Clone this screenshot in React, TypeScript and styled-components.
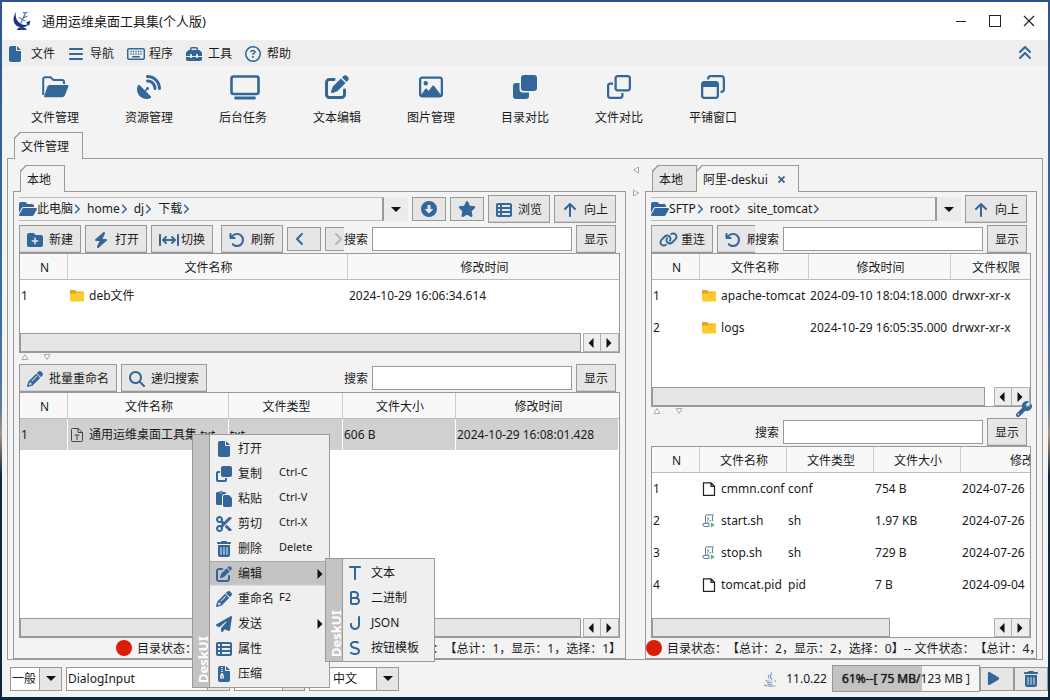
import React from "react";
import styled, { createGlobalStyle, css } from "styled-components";
import {
  FaAngleLeft, FaAngleRight, FaAnglesUp, FaArrowRotateLeft, FaArrowUp, FaArrowsLeftRightToLine, FaB, FaBars,
  FaBolt, FaCircleDown, FaClone, FaFile, FaFileZipper, FaFolderOpen, FaFolderPlus, FaJ, FaJava, FaLink,
  FaMagnifyingGlass, FaPaperPlane, FaPaste, FaPenToSquare, FaPencil, FaPlay, FaRegCircleQuestion, FaRegClone,
  FaRegImage, FaRegKeyboard, FaRegWindowRestore, FaS, FaSatelliteDish, FaScissors, FaStar, FaT, FaTableList,
  FaToolbox, FaTrashCan, FaWrench,
} from "react-icons/fa6";

const BLUE = "#336699";
const LINE = "#999999";
const FACE = "#e6e6e6";
const PANEL = "#f3f3f3";

const Global = createGlobalStyle`
  * { box-sizing: border-box; }
  body {
    margin: 0;
    font: 12px/16px "Noto Sans", "Noto Sans CJK SC", sans-serif;
    color: #1a1a1a;
    text-spacing-trim: space-all;
  }
  button, input, select { font: inherit; color: inherit; margin: 0; padding: 0; border-radius: 0; }
  svg { display: block; flex: none; }
`;

const Desktop = styled.div`
  height: 100vh;
  min-height: 560px;
  padding: 2px 2px 3px;
  display: flex;
  background: linear-gradient(#2c5590 0, #3a6ba8 45%, #5a7ba0 58%, #a89484 62%, #10263c 68%, #0b2740 100%);
`;

const Window = styled.div`
  position: relative;
  flex: 1;
  min-width: 0;
  display: flex;
  flex-direction: column;
  background: ${PANEL};
`;

/* ---------- title, menus, launcher ---------- */

const TitleBar = styled.header`
  height: 38px;
  display: flex;
  align-items: center;
  gap: 10px;
  padding: 0 12px 0 10px;
  background: #fff;
`;

const Title = styled.h1`
  flex: 1;
  margin: 0;
  font-size: 13px;
  font-weight: 400;
`;

const WindowControls = styled.div`
  display: flex;
  gap: 20px;
`;

const PlainButton = styled.button`
  display: flex;
  align-items: center;
  border: 0;
  background: none;
`;

const MenuBar = styled.nav`
  height: 26px;
  display: flex;
  align-items: center;
  gap: 13px;
  padding: 0 15px 0 7px;
  background: #eeeeee;
`;

const MenuButton = styled(PlainButton)`
  width: 46px;
  padding-top: 1px;
  justify-content: space-between;
  white-space: nowrap;
  svg { color: ${BLUE}; }
`;

const CollapseButton = styled(PlainButton)`
  margin-left: auto;
  color: ${BLUE};
`;

const Launcher = styled.div`
  height: 66px;
  display: flex;
  padding: 8px 6px 0;
`;

const LaunchButton = styled.button`
  width: 94px;
  display: flex;
  flex-direction: column;
  align-items: center;
  gap: 10px;
  border: 0;
  background: none;
`;

const LaunchIcon = styled.span`
  height: 26px;
  display: flex;
  align-items: center;
  color: ${BLUE};
`;

/* ---------- tabs and panes ---------- */

const Tabs = styled.div<{ $indent: number }>`
  height: 27px;
  margin-bottom: -1px;
  padding-left: ${(p) => p.$indent}px;
  display: flex;
  flex: none;
  position: relative;
`;

const Tab = styled.button<{ $active?: boolean }>`
  display: flex;
  align-items: center;
  gap: 10px;
  padding: 2px 13px ${(p) => (p.$active ? 1 : 0)}px 6px;
  border: 1px solid ${LINE};
  ${(p) => p.$active && "border-bottom: 0;"}
  border-top-left-radius: 6px;
  corner-shape: bevel;
  background: ${(p) => (p.$active ? PANEL : FACE)};
  & + & { margin-left: -1px; }
  svg { color: ${BLUE}; }
`;

const Workspace = styled.main`
  flex: 1;
  min-height: 0;
  margin: 0 5px;
  padding: 6px 5px 0;
  border: 1px solid ${LINE};
  display: grid;
  grid-template-columns: minmax(0, 61fr) 19px minmax(0, 39fr);
`;

const Column = styled.section`
  display: flex;
  flex-direction: column;
  min-height: 0;
`;

const Pane = styled.div`
  flex: 1;
  min-height: 0;
  display: flex;
  flex-direction: column;
  padding: 3px 5px 0;
  border: 1px solid ${LINE};
`;

const ColumnHandle = styled.div`
  display: flex;
  flex-direction: column;
  align-items: center;
  gap: 15px;
  padding-top: 1px;
`;

const RowHandle = styled.div`
  height: 11px;
  flex: none;
  display: flex;
  align-items: flex-start;
  gap: 14px;
  padding-left: 2px;
`;

/* ---------- tool rows ---------- */

const ToolRow = styled.div`
  height: 28px;
  flex: none;
  display: flex;
  align-items: center;
  gap: 4px;
  padding-right: 4px;
  & + & { margin-top: 2px; }
`;

const ToolGroup = styled.div`
  flex: 1;
  min-width: 0;
  display: flex;
  align-items: center;
  gap: 4px;
  overflow: hidden;
`;

const Gap = styled.span`
  width: 0;
  flex: none;
`;

const face = css`
  display: flex;
  align-items: center;
  flex: none;
  border: 1px solid ${LINE};
  background: ${FACE};
  white-space: nowrap;
  svg { color: ${BLUE}; }
`;

const ToolButton = styled.button<{ $width?: number }>`
  ${face}
  width: ${(p) => p.$width ?? 62}px;
  height: 28px;
  padding: 1px 7px 0;
  justify-content: space-between;
  box-shadow: inset 0 -1px #cfcfcf;
`;

const IconButton = styled.button<{ $muted?: boolean; $step?: boolean }>`
  ${face}
  width: 34px;
  height: 24px;
  justify-content: center;
  padding-right: ${(p) => (p.$step ? 8 : 0)}px;
  ${(p) => p.$muted && "svg { color: #b5b9b0; }"}
`;

const ShowButton = styled.button`
  ${face}
  width: 40px;
  height: 28px;
  padding-top: 1px;
  justify-content: center;
  box-shadow: inset 0 -1px #cfcfcf;
`;

const SearchLabel = styled.label`
  display: flex;
  align-items: center;
  flex: none;
  margin-left: -4px;
  padding-top: 1px;
`;

const SearchInput = styled.input`
  width: 200px;
  height: 24px;
  padding: 0 4px;
  border: 1px solid ${LINE};
  background: #fff;
`;

const PathBox = styled.div`
  flex: 1;
  min-width: 0;
  height: 24px;
  display: flex;
  align-items: center;
  gap: 7px;
  border: 1px solid #bbb;
  border-left: 0;
  border-right: 2px solid ${LINE};
  margin-right: -4px;
  overflow: hidden;
`;

const Crumb = styled.a`
  display: flex;
  align-items: center;
  color: inherit;
  text-decoration: none;
  white-space: nowrap;
  svg { color: ${BLUE}; }
`;

const CrumbArrow = styled(FaAngleRight)`
  margin: 0 -3px 0 -2px;
`;

const DropButton = styled.button`
  width: 24px;
  height: 24px;
  display: flex;
  align-items: center;
  justify-content: center;
  border: 0;
  background: #ebebeb;
`;

/* ---------- tables ---------- */

const TableFrame = styled.div<{ $height?: number }>`
  ${(p) => (p.$height ? `height: ${p.$height}px; flex: none;` : "flex: 1; min-height: 0;")}
  display: flex;
  flex-direction: column;
  border: 1px solid ${LINE};
  background: #fff;
`;

const TableView = styled.div`
  flex: 1;
  min-height: 0;
  overflow: hidden;
`;

const Table = styled.table<{ $width?: number }>`
  width: ${(p) => (p.$width ? `${p.$width}px` : "100%")};
  table-layout: fixed;
  border-collapse: separate;
  border-spacing: 0;
`;

const Th = styled.th`
  height: 26px;
  padding: 2px 0 0 2px;
  font-weight: 400;
  text-align: center;
  background: #f8f8f8;
  border-right: 1px solid #ccc;
  border-bottom: 1px solid #bbb;
  white-space: nowrap;
  overflow: hidden;
  &:last-child { border-right: 0; }
`;

const Td = styled.td<{ $selected?: boolean }>`
  height: 32px;
  padding: 0 0 0 1px;
  white-space: nowrap;
  overflow: hidden;
  ${(p) => p.$selected && "background: #d0d0d0; border-right: 1px solid #fff; border-bottom: 1px solid #fff;"}
`;

const NameCell = styled.span`
  display: flex;
  align-items: center;
  gap: 5px;
  padding-left: 1px;
`;

const ScrollBar = styled.div`
  height: 19px;
  flex: none;
  display: flex;
`;

const ScrollTrack = styled.div`
  flex: 1;
  padding-right: 2px;
`;

const ScrollThumb = styled.div<{ $share: number }>`
  width: ${(p) => p.$share}%;
  height: 100%;
  background: ${FACE};
  border: 1px solid ${LINE};
`;

const ScrollButton = styled.button`
  width: 18px;
  display: flex;
  align-items: center;
  justify-content: center;
  padding-right: 2px;
  border: 1px solid #b0b0b0;
  background: #ededed;
  & + & { border-left: 0; }
`;

const Status = styled.div<{ $end?: boolean }>`
  height: 20px;
  flex: none;
  margin: 0 -5px;
  display: flex;
  align-items: center;
  justify-content: ${(p) => (p.$end ? "flex-end" : "flex-start")};
  gap: 5px;
  padding-right: ${(p) => (p.$end ? 4 : 0)}px;
  overflow: hidden;
  white-space: nowrap;
`;

const StatusText = styled.span`
  padding-top: 1px;
`;

const Lamp = styled.span`
  width: 16px;
  height: 16px;
  flex: none;
  border-radius: 50%;
  background: #d81e06;
`;

const WrenchButton = styled(PlainButton)`
  position: absolute;
  right: 16px;
  top: 399px;
  color: ${BLUE};
`;

/* ---------- bottom bar ---------- */

const BottomBar = styled.footer`
  height: 37px;
  flex: none;
  display: flex;
  align-items: center;
  padding-left: 8px;
  gap: 4px;
`;

const Combo = styled.span<{ $width: number }>`
  width: ${(p) => p.$width}px;
  height: 24px;
  flex: none;
  display: flex;
  border: 1px solid ${LINE};
  background: #fff;
`;

const ComboSelect = styled.select<{ $centred?: boolean }>`
  flex: 1;
  min-width: 0;
  padding-left: ${(p) => (p.$centred ? 4 : 1)}px;
  text-align-last: ${(p) => (p.$centred ? "center" : "left")};
  border: 0;
  appearance: none;
  background: #fff;
`;

const ComboArrow = styled.span`
  width: 22px;
  display: flex;
  align-items: center;
  justify-content: center;
  border-left: 1px solid ${LINE};
  background: ${FACE};
  pointer-events: none;
`;

const Java = styled.div`
  margin-left: auto;
  display: flex;
  align-items: center;
  gap: 8px;
  svg { color: #4c7faf; }
`;

const Memory = styled.div`
  width: 148px;
  height: 27px;
  margin-left: 1px;
  display: flex;
  align-items: center;
  justify-content: center;
  border: 1px solid ${LINE};
  background: linear-gradient(90deg, #c3c3c3 61%, #f5f5f5 61%);
  white-space: pre;
`;

const MemoryUsed = styled.span`
  text-shadow: 0 0 1px #1a1a1a;
`;

const RunButtons = styled.div`
  display: flex;
  margin-left: -4px;
`;

/* ---------- popup menus ---------- */

const Popup = styled.div<{ $left: number; $top: number; $width: number }>`
  position: absolute;
  left: ${(p) => p.$left}px;
  top: ${(p) => p.$top}px;
  width: ${(p) => p.$width}px;
  display: flex;
  border: 1px solid ${LINE};
  background: #efefef;
`;

const Brand = styled.div`
  width: 17px;
  flex: none;
  display: flex;
  align-items: flex-end;
  background: #c3c3c3;
  border-left: 1px solid ${LINE};
  padding-top: 4px;
  color: #fff;
  font-size: 13px;
  font-weight: 700;
  line-height: 11px;
  writing-mode: vertical-rl;
  transform: rotate(180deg);
`;

const PopupList = styled.div`
  flex: 1;
  padding: 1px 0;
`;

const PopupItem = styled.button<{ $active?: boolean; $wide?: boolean }>`
  width: 100%;
  height: 25px;
  display: flex;
  align-items: center;
  gap: ${(p) => (p.$wide ? 7 : 6)}px;
  padding: 0 6px 0 ${(p) => (p.$wide ? 3 : 6)}px;
  border: 0;
  white-space: nowrap;
  text-align: left;
  background: ${(p) => (p.$active ? "#c3c3c3" : "transparent")};
  box-shadow: ${(p) => (p.$active ? "inset 0 1px #aaa, inset 0 -1px #ddd" : "none")};
`;

const PopupIcon = styled.span<{ $wide?: boolean }>`
  width: ${(p) => (p.$wide ? 18 : 16)}px;
  flex: none;
  display: flex;
  justify-content: center;
  color: ${BLUE};
`;

const PopupText = styled.span`
  min-width: 36px;
`;

const Shortcut = styled.span`
  font-size: 11px;
  margin: 0 0 3px -1px;
`;

const SubArrow = styled.span`
  margin-left: auto;
`;

/* ---------- drawings ---------- */

const Logo = () => (
  <svg width="20" height="22" viewBox="0 0 20 22">
    <path d="M4 2C0 8 1 14 6 16.500C10 18 14 17.500 17.500 13.500C14 15.500 10 15.500 7 12.500C4 10 3 6 4 2Z" fill="#1f2f86" />
    <path d="M13.500 3L8.500 14M13.500 3L15.500 2M13.500 3L11 2.500M15.500 6L12 7.500M7 7.500L10.500 9.500L13.500 11" stroke="#5d7fb5" strokeWidth="1.300" fill="none" />
    <path d="M4.500 20.500C6.500 16 12 16 15.500 20C12 19 11 21 9.500 19.500C8 21 7 19 4.500 20.500Z" fill="#1f2f86" />
    <path d="M14 12.500L18.500 10.500L17 16Z" fill="#1f2f86" />
  </svg>
);

const OpenFolder = () => (
  <svg width="27" height="22" viewBox="0 0 27 22">
    <path d="M1.200 19V3.200A2 2 0 0 1 3.200 1.200H8.500L11.500 4H20A2 2 0 0 1 22 6V8" fill="none" stroke="currentColor" strokeWidth="2" />
    <path d="M7.500 9H25.500Q27 9 26.400 10.500L22.800 19.500Q22 21.300 20 21.300H3Q1.600 21.300 2.200 19.700L5.400 10.600Q6 9 7.500 9Z" fill="currentColor" />
  </svg>
);

const Monitor = () => (
  <svg width="34" height="25" viewBox="-4 0 34 25">
    <rect x="1.500" y="1.500" width="27" height="17.500" rx="2" fill="none" stroke="currentColor" strokeWidth="2.600" />
    <path d="M5.500 23H24.500" stroke="currentColor" strokeWidth="2.800" strokeLinecap="round" />
  </svg>
);

const SolidPair = () => (
  <svg width="24" height="24" viewBox="0 0 24 24">
    <path d="M3 8H6.500V14Q6.500 17.500 10 17.500H16V21Q16 24 13 24H3Q0 24 0 21V11Q0 8 3 8Z" fill="currentColor" />
    <rect x="8" y="0" width="16" height="16" rx="3" fill="currentColor" />
  </svg>
);

const YellowFolder = () => (
  <svg width="14" height="12" viewBox="0 0 14 12">
    <path d="M0 2V1Q0 0 1 0H5L6.500 1.500H13Q14 1.500 14 2.500V5H0Z" fill="#e0a520" />
    <path d="M0 3.500H5.500L7 2.500H14V10.500Q14 11.500 13 11.500H1Q0 11.500 0 10.500Z" fill="#ffcb2d" />
  </svg>
);

const TextFile = () => (
  <svg width="14" height="14" viewBox="0 0 14 14" fill="none" stroke="#444">
    <path d="M2.500 .5H8L12.500 4.500V12.500Q12.500 13.500 11.500 13.500H2.500Q1.500 13.500 1.500 12.500V1.500Q1.500 .5 2.500 .5ZM8 .5V4.500H12.500" />
    <path d="M4.500 7H9.500M7 7V12" />
  </svg>
);

const BlankFile = () => (
  <svg width="14" height="14" viewBox="0 0 14 14" fill="none" stroke="#222" strokeWidth="1.200">
    <path d="M1.500 .8H9L12.500 4.300V13.300H1.500ZM9 .8V4.300H12.500" />
  </svg>
);

const ScriptFile = () => (
  <svg width="14" height="14" viewBox="0 0 14 14" fill="none" stroke="#5f8296">
    <path d="M3.500 9.500V2Q3.500 .8 5 .8H11.500Q10.500 1.500 10.500 3V7M3.500 9.500H1V11Q1 12.500 3 12.500H7V9.500H3.500" />
    <path d="M5 3.500L7 5L5 6.500M7.500 6.500H9M5 8H7" strokeWidth=".9" />
    <path d="M8.800 8.500L12.800 11L8.800 13.500Z" fill="#4fb36a" stroke="none" />
  </svg>
);

const shapes = {
  left: "M5 0L0 5L5 10Z",
  right: "M0 0L5 5L0 10Z",
  down: "M0 0H10L5 5Z",
};

const Solid = ({ dir }: { dir: keyof typeof shapes }) => (
  <svg width={dir === "down" ? 10 : 6} height={dir === "down" ? 5 : 10} viewBox={dir === "down" ? "0 0 10 5" : "0 0 5 10"}>
    <path d={shapes[dir]} fill="#111" />
  </svg>
);

const outlines = {
  left: "M6.500 1V7L1.500 4Z",
  right: "M1.500 1V7L6.500 4Z",
  up: "M1 6.500H7L4 1.500Z",
  down: "M1 1.500H7L4 6.500Z",
};

const Hollow = ({ dir }: { dir: keyof typeof outlines }) => (
  <svg width="8" height="8" viewBox="0 0 8 8">
    <path d={outlines[dir]} fill="#fff" stroke="#aaa" />
  </svg>
);

const CloseMark = () => (
  <svg width="7" height="7" viewBox="0 0 7 7">
    <path d="M.5 .5L6.500 6.500M6.500 .5L.5 6.500" stroke="currentColor" strokeWidth="1.800" />
  </svg>
);

/* ---------- data ---------- */

const MenuFile = styled(FaFile)`
  margin-left: -2px;
`;

const menus = [
  { text: "文件", icon: <MenuFile size={16} /> },
  { text: "导航", icon: <FaBars size={16} /> },
  { text: "程序", icon: <FaRegKeyboard size={18} /> },
  { text: "工具", icon: <FaToolbox size={16} /> },
  { text: "帮助", icon: <FaRegCircleQuestion size={16} /> },
];

const launchers = [
  { text: "文件管理", icon: <OpenFolder /> },
  { text: "资源管理", icon: <FaSatelliteDish size={24} /> },
  { text: "后台任务", icon: <Monitor /> },
  { text: "文本编辑", icon: <FaPenToSquare size={24} /> },
  { text: "图片管理", icon: <FaRegImage size={24} /> },
  { text: "目录对比", icon: <SolidPair /> },
  { text: "文件对比", icon: <FaRegClone size={24} /> },
  { text: "平铺窗口", icon: <FaRegWindowRestore size={24} /> },
];

type Item = { text: string; icon: React.ReactNode; keys?: string; sub?: boolean; active?: boolean };

const contextItems: Item[] = [
  { text: "打开", icon: <FaFile size={16} /> },
  { text: "复制", icon: <FaClone size={16} />, keys: "Ctrl-C" },
  { text: "粘贴", icon: <FaPaste size={16} />, keys: "Ctrl-V" },
  { text: "剪切", icon: <FaScissors size={16} />, keys: "Ctrl-X" },
  { text: "删除", icon: <FaTrashCan size={16} />, keys: "Delete" },
  { text: "编辑", icon: <FaPenToSquare size={16} />, sub: true, active: true },
  { text: "重命名", icon: <FaPencil size={16} />, keys: "F2" },
  { text: "发送", icon: <FaPaperPlane size={16} />, sub: true },
  { text: "属性", icon: <FaTableList size={16} /> },
  { text: "压缩", icon: <FaFileZipper size={16} /> },
];

const editItems: Item[] = [
  { text: "文本", icon: <FaT size={16} /> },
  { text: "二进制", icon: <FaB size={16} /> },
  { text: "JSON", icon: <FaJ size={16} /> },
  { text: "按钮模板", icon: <FaS size={16} /> },
];

/* ---------- parts ---------- */

const Path = ({ crumbs }: { crumbs: string[] }) => (
  <>
    <PathBox>
      {crumbs.map((c, i) => (
        <Crumb href="#" key={c}>
          {i === 0 && <FaFolderOpen size={18} />}
          {c}
          <CrumbArrow size={12} />
        </Crumb>
      ))}
    </PathBox>
    <DropButton aria-label="历史路径"><Solid dir="down" /></DropButton>
  </>
);

const Search = ({ id }: { id: string }) => (
  <>
    <SearchLabel htmlFor={id}>搜索</SearchLabel>
    <SearchInput id={id} type="text" />
    <ShowButton>显示</ShowButton>
  </>
);

type GridProps = {
  head: string[];
  cols: (number | undefined)[];
  rows: string[][];
  icons: React.ReactNode[];
  width?: number;
  height?: number;
  share: number;
  selected?: boolean;
};

const Grid = ({ head, cols, rows, icons, width, height, share, selected }: GridProps) => (
  <TableFrame $height={height}>
    <TableView>
      <Table $width={width}>
        <colgroup>{cols.map((w, i) => <col key={i} width={w} />)}</colgroup>
        <thead>
          <tr>{head.map((h) => <Th key={h}>{h}</Th>)}</tr>
        </thead>
        <tbody>
          {rows.map((row, r) => (
            <tr key={r}>
              {row.map((cell, c) => (
                <Td key={c} $selected={selected}>
                  {c === 1 ? <NameCell>{icons[r]}{cell}</NameCell> : cell}
                </Td>
              ))}
            </tr>
          ))}
        </tbody>
      </Table>
    </TableView>
    <ScrollBar>
      <ScrollTrack><ScrollThumb $share={share} /></ScrollTrack>
      <ScrollButton aria-label="向左滚动"><Solid dir="left" /></ScrollButton>
      <ScrollButton aria-label="向右滚动"><Solid dir="right" /></ScrollButton>
    </ScrollBar>
  </TableFrame>
);

const PopupMenu = ({ items, wide }: { items: Item[]; wide?: boolean }) => (
  <>
    <Brand>DeskUI</Brand>
    <PopupList role="menu">
      {items.map((it) => (
        <PopupItem key={it.text} role="menuitem" $active={it.active} $wide={wide}>
          <PopupIcon $wide={wide}>{it.icon}</PopupIcon>
          <PopupText>{it.text}</PopupText>
          {it.keys && <Shortcut>{it.keys}</Shortcut>}
          {it.sub && <SubArrow><Solid dir="right" /></SubArrow>}
        </PopupItem>
      ))}
    </PopupList>
  </>
);

const Choice = ({ label, value, width, centred }: { label: string; value: string; width: number; centred?: boolean }) => (
  <Combo $width={width}>
    <ComboSelect aria-label={label} defaultValue={value} $centred={centred}>
      <option>{value}</option>
    </ComboSelect>
    <ComboArrow><Solid dir="down" /></ComboArrow>
  </Combo>
);

export default function App() {
  return (
    <>
      <Global />
      <Desktop>
        <Window>
          <TitleBar>
            <Logo />
            <Title>通用运维桌面工具集(个人版)</Title>
            <WindowControls>
              <PlainButton aria-label="最小化">
                <svg width="14" height="14" viewBox="0 0 14 14"><path d="M2 7.500H12" stroke="#222" /></svg>
              </PlainButton>
              <PlainButton aria-label="最大化">
                <svg width="14" height="14" viewBox="0 0 14 14"><rect x="1.500" y="1.500" width="11" height="11" fill="none" stroke="#222" /></svg>
              </PlainButton>
              <PlainButton aria-label="关闭">
                <svg width="14" height="14" viewBox="0 0 14 14"><path d="M2 2L12 12M12 2L2 12" stroke="#222" strokeWidth="1.200" /></svg>
              </PlainButton>
            </WindowControls>
          </TitleBar>

          <MenuBar>
            {menus.map((m) => <MenuButton key={m.text}>{m.icon}{m.text}</MenuButton>)}
            <CollapseButton aria-label="收起"><FaAnglesUp size={16} /></CollapseButton>
          </MenuBar>

          <Launcher>
            {launchers.map((l) => (
              <LaunchButton key={l.text}><LaunchIcon>{l.icon}</LaunchIcon>{l.text}</LaunchButton>
            ))}
          </Launcher>

          <Tabs $indent={12}><Tab $active>文件管理</Tab></Tabs>
          <Workspace>
            <Column>
              <Tabs $indent={7}><Tab $active>本地</Tab></Tabs>
              <Pane>
                <ToolRow>
                  <Path crumbs={["此电脑", "home", "dj", "下载"]} />
                  <IconButton aria-label="下载"><FaCircleDown size={16} /></IconButton>
                  <IconButton aria-label="收藏"><FaStar size={18} /></IconButton>
                  <ToolButton><FaTableList size={16} />浏览</ToolButton>
                  <ToolButton><FaArrowUp size={16} />向上</ToolButton>
                </ToolRow>
                <ToolRow>
                  <ToolGroup>
                    <ToolButton><FaFolderPlus size={16} />新建</ToolButton>
                    <ToolButton><FaBolt size={16} />打开</ToolButton>
                    <ToolButton><FaArrowsLeftRightToLine size={20} />切换</ToolButton>
                    <Gap />
                    <ToolButton><FaArrowRotateLeft size={16} />刷新</ToolButton>
                    <IconButton aria-label="后退" $step><FaAngleLeft size={16} /></IconButton>
                    <IconButton aria-label="前进" $step $muted><FaAngleRight size={16} /></IconButton>
                  </ToolGroup>
                  <Search id="local-dirs" />
                </ToolRow>
                <Grid
                  height={100}
                  head={["N", "文件名称", "修改时间"]}
                  cols={[48, 280, undefined]}
                  rows={[["1", "deb文件", "2024-10-29 16:06:34.614"]]}
                  icons={[<YellowFolder />]}
                  share={100}
                />
                <RowHandle><Hollow dir="up" /><Hollow dir="down" /></RowHandle>
                <ToolRow>
                  <ToolGroup>
                    <ToolButton $width={98}><FaPencil size={16} />批量重命名</ToolButton>
                    <ToolButton $width={86}><FaMagnifyingGlass size={16} />递归搜索</ToolButton>
                  </ToolGroup>
                  <Search id="local-files" />
                </ToolRow>
                <Grid
                  head={["N", "文件名称", "文件类型", "文件大小", "修改时间"]}
                  cols={[48, 161, 114, 113, undefined]}
                  rows={[["1", "通用运维桌面工具集.txt", "txt", "606 B", "2024-10-29 16:08:01.428"]]}
                  icons={[<TextFile />]}
                  share={100}
                  selected
                />
                <Status $end>
                  <Lamp />
                  <StatusText>目录状态：【总计：1，显示：1，选择：0】-- 文件状态：【总计：1，显示：1，选择：1】</StatusText>
                </Status>
              </Pane>
            </Column>

            <ColumnHandle><Hollow dir="left" /><Hollow dir="right" /></ColumnHandle>

            <Column>
              <Tabs $indent={7}>
                <Tab>本地</Tab>
                <Tab $active>阿里-deskui<CloseMark /></Tab>
              </Tabs>
              <Pane>
                <ToolRow>
                  <Path crumbs={["SFTP", "root", "site_tomcat"]} />
                  <ToolButton><FaArrowUp size={16} />向上</ToolButton>
                </ToolRow>
                <ToolRow>
                  <ToolGroup>
                    <ToolButton><FaLink size={19} />重连</ToolButton>
                    <ToolButton><FaArrowRotateLeft size={16} />刷新</ToolButton>
                  </ToolGroup>
                  <Search id="remote-dirs" />
                </ToolRow>
                <Grid
                  height={154}
                  width={387}
                  head={["N", "文件名称", "修改时间", "文件权限"]}
                  cols={[48, 109, 142, 88]}
                  rows={[
                    ["1", "apache-tomcat", "2024-09-10 18:04:18.000", "drwxr-xr-x"],
                    ["2", "logs", "2024-10-29 16:05:35.000", "drwxr-xr-x"],
                  ]}
                  icons={[<YellowFolder />, <YellowFolder />]}
                  share={98}
                />
                <RowHandle><Hollow dir="up" /><Hollow dir="down" /></RowHandle>
                <ToolRow>
                  <ToolGroup />
                  <Search id="remote-files" />
                </ToolRow>
                <Grid
                  width={413}
                  head={["N", "文件名称", "文件类型", "文件大小", "修改时间"]}
                  cols={[48, 87, 87, 87, 144]}
                  rows={[
                    ["1", "cmmn.conf", "conf", "754 B", "2024-07-26"],
                    ["2", "start.sh", "sh", "1.97 KB", "2024-07-26"],
                    ["3", "stop.sh", "sh", "729 B", "2024-07-26"],
                    ["4", "tomcat.pid", "pid", "7 B", "2024-09-04"],
                  ]}
                  icons={[<BlankFile />, <ScriptFile />, <ScriptFile />, <BlankFile />]}
                  share={70}
                />
                <Status>
                  <Lamp />
                  <StatusText>目录状态：【总计：2，显示：2，选择：0】-- 文件状态：【总计：4，显示：4，选择：0】</StatusText>
                </Status>
              </Pane>
            </Column>
          </Workspace>

          <BottomBar>
            <Choice label="外观" value="一般" width={52} />
            <Choice label="字体" value="DialogInput" width={164} />
            <Choice label="字号" value="12" width={71} />
            <Choice label="语言" value="中文" width={90} centred />
            <Java><FaJava size={16} />11.0.22</Java>
            <Memory><MemoryUsed>61%--[ 75 MB/</MemoryUsed>123 MB ]</Memory>
            <RunButtons>
              <IconButton aria-label="运行" $step><FaPlay size={15} /></IconButton>
              <IconButton aria-label="清理"><FaTrashCan size={16} /></IconButton>
            </RunButtons>
          </BottomBar>

          <WrenchButton aria-label="设置"><FaWrench size={16} /></WrenchButton>
          <Popup $left={190} $top={432} $width={138}>
            <PopupMenu items={contextItems} />
          </Popup>
          <Popup $left={323} $top={556} $width={110}>
            <PopupMenu items={editItems} wide />
          </Popup>
        </Window>
      </Desktop>
    </>
  );
}
